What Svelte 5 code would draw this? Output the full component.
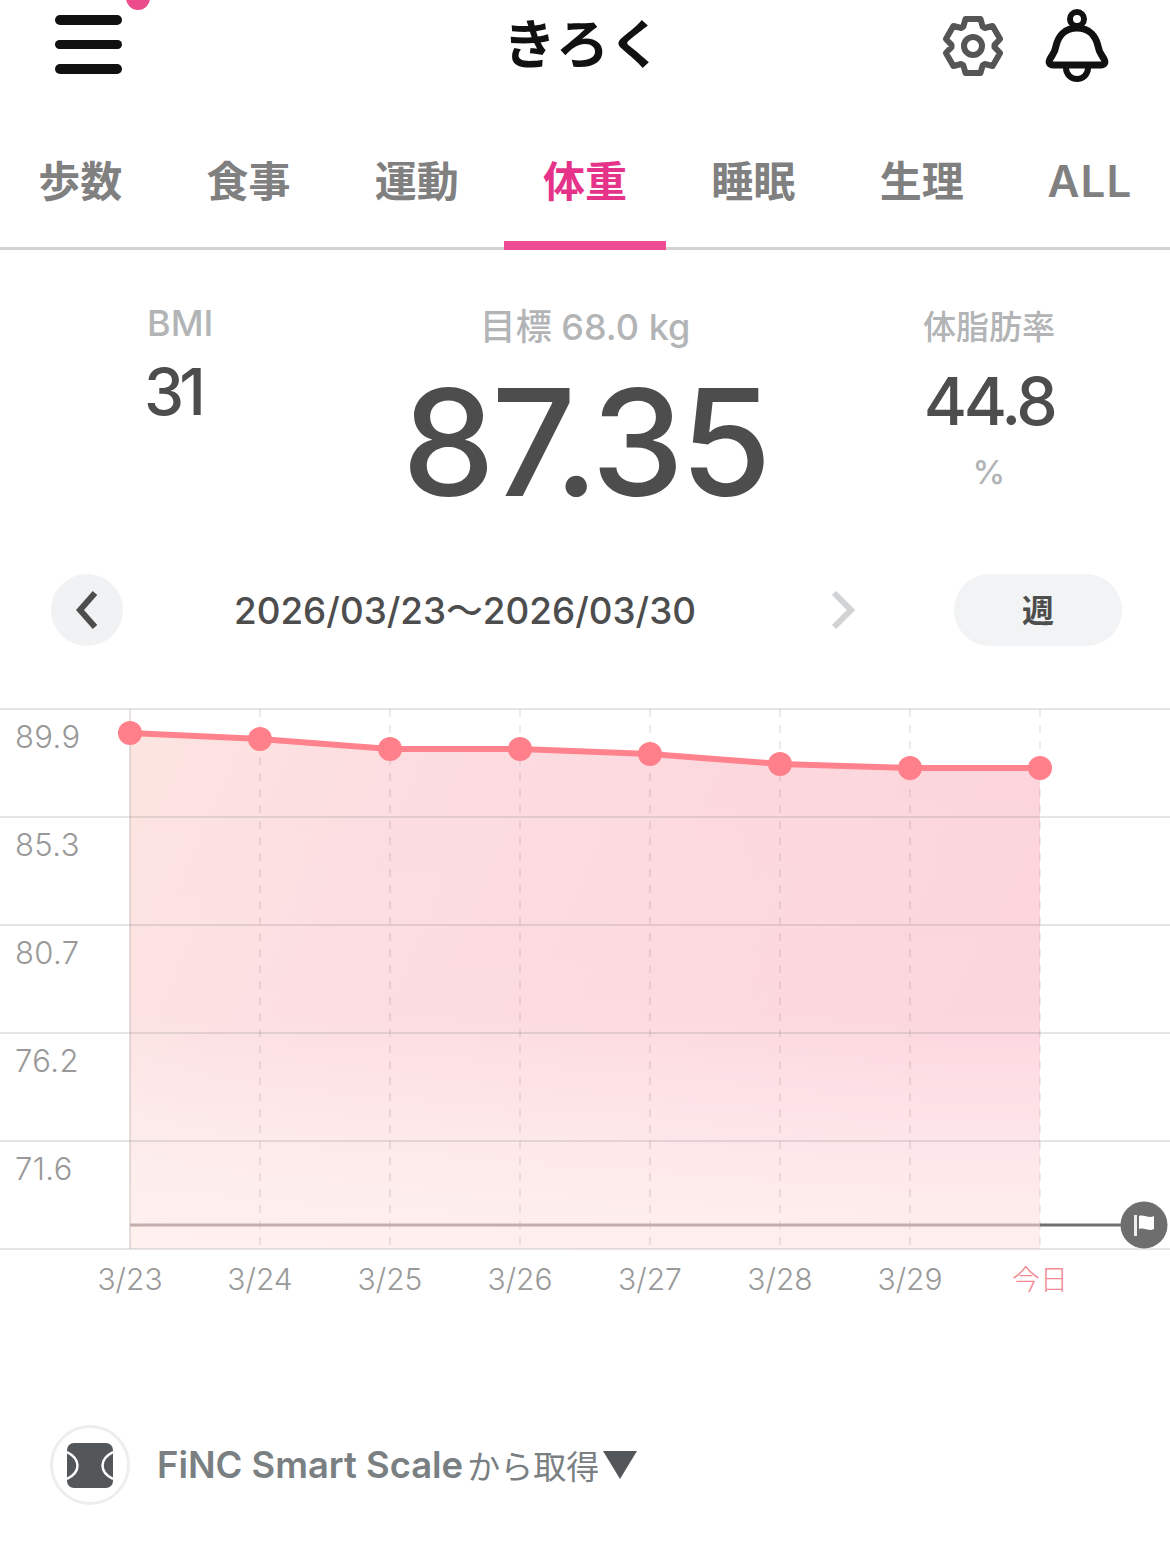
<script>
  const tabs = ['歩数', '食事', '運動', '体重', '睡眠', '生理', 'ALL'];
  const active = '体重';

  const gridY = [709, 817, 925, 1033, 1141, 1249];
  const yLabels = ['89.9', '85.3', '80.7', '76.2', '71.6'];
  const points = [
    { x: 130, y: 733, label: '3/23' },
    { x: 260, y: 739, label: '3/24' },
    { x: 390, y: 749, label: '3/25' },
    { x: 520, y: 749, label: '3/26' },
    { x: 650, y: 754, label: '3/27' },
    { x: 780, y: 764, label: '3/28' },
    { x: 910, y: 768, label: '3/29' },
    { x: 1040, y: 768, label: '今日' }
  ];
  const line = points.map((p) => p.x + ',' + p.y).join(' ');
  const area = '130,1249 ' + line + ' 1040,1249';

  // six teeth, stroked with round joins
  function gearPath(cx, cy, outer, inner) {
    let d = '';
    for (let i = 0; i < 6; i++) {
      const a = -Math.PI / 2 + (i * Math.PI) / 3;
      const pts = [
        [inner, a - 0.47],
        [outer, a - 0.27],
        [outer, a + 0.27],
        [inner, a + 0.47]
      ];
      for (const [r, t] of pts) {
        d += (d ? 'L' : 'M') + (cx + r * Math.cos(t)).toFixed(1) + ' ' + (cy + r * Math.sin(t)).toFixed(1);
      }
    }
    return d + 'Z';
  }
</script>

<div class="page">
  <header>
    <div class="menu">
      <span></span><span></span><span></span>
      <i class="dot"></i>
    </div>
    <h1>きろく</h1>
    <div class="actions">
      <svg class="gear" width="66" height="68" viewBox="0 0 66 68">
        <path d={gearPath(33, 34, 28, 21.5)} fill="none" stroke="#555" stroke-width="6" stroke-linejoin="round" />
        <circle cx="33" cy="34" r="9" fill="none" stroke="#555" stroke-width="6" />
      </svg>
      <svg class="bell" width="66" height="76" viewBox="0 0 66 76">
        <circle cx="33" cy="13" r="7" fill="none" stroke="#111" stroke-width="6" />
        <path d="M33 22C20 22 14 31 12 40C11 47 8 49 6 53C4 57 6 59 9 59L57 59C60 59 62 57 60 53C58 49 55 47 54 40C52 31 46 22 33 22Z" fill="none" stroke="#111" stroke-width="7" stroke-linejoin="round" />
        <path d="M22 62A11 11 0 0 0 44 62" fill="none" stroke="#111" stroke-width="6" />
      </svg>
    </div>
  </header>

  <nav>
    {#each tabs as tab}
      <div class="tab" class:active={tab === active} class:latin={tab === 'ALL'}>{tab}</div>
    {/each}
  </nav>

  <section class="stats">
    <div class="bmi">
      <div class="label">BMI</div>
      <div class="small-value">31</div>
    </div>
    <div class="weight">
      <div class="label">目標 68.0 kg</div>
      <div class="big-value">87.35</div>
    </div>
    <div class="fat">
      <div class="label">体脂肪率</div>
      <div class="fat-value">44.8</div>
      <div class="label unit">%</div>
    </div>
  </section>

  <section class="range">
    <button class="prev" aria-label="前へ">
      <svg width="28" height="40" viewBox="0 0 28 40">
        <path d="M22 3L7 20L22 37" fill="none" stroke="#4d4d4d" stroke-width="6" />
      </svg>
    </button>
    <div class="dates">2026/03/23～2026/03/30</div>
    <button class="next" aria-label="次へ">
      <svg width="28" height="40" viewBox="0 0 28 40">
        <path d="M4 3L21 20L4 37" fill="none" stroke="#d0d2d4" stroke-width="6" />
      </svg>
    </button>
    <button class="period">週</button>
  </section>

  <svg class="chart" width="1170" height="620" viewBox="0 690 1170 620">
    <defs>
      <linearGradient id="area-h" x1="0" y1="0" x2="1" y2="0.25">
        <stop offset="0" stop-color="#fce5e1" />
        <stop offset="0.3" stop-color="#fcdde1" />
        <stop offset="1" stop-color="#fcd4dc" />
      </linearGradient>
      <linearGradient id="area-v" x1="0" y1="0" x2="0" y2="1">
        <stop offset="0" stop-color="#fff" stop-opacity="0" />
        <stop offset="0.55" stop-color="#fff" stop-opacity="0.05" />
        <stop offset="1" stop-color="#fff6f2" stop-opacity="0.8" />
      </linearGradient>
    </defs>

    <polygon points={area} fill="url(#area-h)" />
    <polygon points={area} fill="url(#area-v)" />

    {#each gridY as y}
      <line x1="0" x2="1170" y1={y} y2={y} stroke="#8a8a8a" stroke-opacity="0.22" stroke-width="2" />
    {/each}

    {#each points as p, i}
      {#if i === 0}
        <line x1={p.x} x2={p.x} y1="709" y2="1249" stroke="#8a6a6a" stroke-opacity="0.2" stroke-width="2" />
      {:else}
        <line x1={p.x} x2={p.x} y1="709" y2="1249" stroke="#8a6a6a" stroke-opacity="0.14" stroke-width="2" stroke-dasharray="8 8" />
      {/if}
      <text class={i === 7 ? 'x-label today' : 'x-label'} x={p.x} y="1290" text-anchor="middle">{p.label}</text>
    {/each}

    {#each yLabels as label, i}
      <text class="y-label" x="15" y={gridY[i] + 39}>{label}</text>
    {/each}

    <line x1="130" x2="1040" y1="1225" y2="1225" stroke="#c4aeac" stroke-width="3" />
    <line x1="1040" x2="1125" y1="1225" y2="1225" stroke="#707070" stroke-width="3" />
    <circle cx="1144" cy="1225" r="23.5" fill="#6e6e6e" />
    <rect x="1134" y="1215" width="3" height="21" fill="#eee" />
    <path d="M1139 1216C1144 1214 1149 1219 1154 1216L1154 1229C1149 1232 1144 1227 1139 1229Z" fill="#fff" />

    <polyline points={line} fill="none" stroke="#ff828c" stroke-width="6" />
    {#each points as p}
      <circle cx={p.x} cy={p.y} r="12" fill="#ff7f8a" />
    {/each}
  </svg>

  <footer>
    <div class="device">
      <svg width="46" height="45" viewBox="0 0 46 45">
        <rect x="0" y="0" width="46" height="45" rx="7" fill="#54575a" />
        <path d="M0 9C14 16 14 29 0 36" fill="none" stroke="#fff" stroke-width="2.5" />
        <path d="M46 9C32 16 32 29 46 36" fill="none" stroke="#fff" stroke-width="2.5" />
      </svg>
    </div>
    <span class="source">FiNC Smart Scale</span><span class="source-jp">から取得</span><span class="caret"></span>
  </footer>
</div>

<style>
  :global(body) {
    background: #fff;
  }
  .page {
    width: 1170px;
    height: 1556px;
    overflow: hidden;
    font-family: Inter, 'Noto Sans CJK JP', sans-serif;
  }
  header {
    display: grid;
    grid-template-columns: 1fr auto 1fr;
    align-items: start;
    height: 130px;
    padding: 0 60px 0 55px;
    box-sizing: border-box;
  }
  .menu {
    position: relative;
    display: flex;
    flex-direction: column;
    gap: 15px;
    width: 67px;
    padding-top: 15px;
  }
  .menu span {
    display: block;
    height: 9.5px;
    border-radius: 5px;
    background: #111;
  }
  .dot {
    position: absolute;
    left: 71px;
    top: -14px;
    width: 24px;
    height: 24px;
    border-radius: 50%;
    background: #ec4b8c;
  }
  h1 {
    margin: 8px 0 0;
    font-size: 53px;
    line-height: 66px;
    font-weight: 700;
    color: #111;
    font-family: 'Noto Sans CJK JP', sans-serif;
  }
  .actions {
    display: flex;
    justify-content: flex-end;
    gap: 38px;
    padding-top: 6px;
  }
  .gear {
    margin-top: 6px;
  }
  nav {
    display: grid;
    grid-template-columns: repeat(7, 168.3px);
    height: 120px;
    margin-left: -4px;
    border-bottom: 3px solid #d2d2d2;
    width: 1174px;
    box-sizing: border-box;
  }
  .tab {
    text-align: center;
    font-family: 'Noto Sans CJK JP', sans-serif;
    font-size: 42px;
    font-weight: 700;
    line-height: 52px;
    padding-top: 23px;
    color: #808080;
  }
  .tab.latin {
    font-family: Inter, sans-serif;
    font-weight: 600;
    font-size: 44px;
    letter-spacing: 1px;
    padding-top: 25px;
  }
  .tab.active {
    color: #e6338a;
    position: relative;
  }
  .tab.active::after {
    content: '';
    position: absolute;
    left: 3px;
    right: 3px;
    bottom: -3px;
    height: 9px;
    background: #ee4d95;
  }
  .stats {
    display: grid;
    grid-template-columns: 370px 430px 370px;
    height: 324px;
  }
  .label {
    font-size: 36px;
    font-weight: 500;
    line-height: 44px;
    color: #b2b4b6;
  }
  .bmi {
    padding: 51px 0 0 147px;
  }
  .small-value {
    font-size: 64px;
    line-height: 78px;
    letter-spacing: -5px;
    font-weight: 500;
    color: #4d4d4d;
    margin: 8px 0 0 -3px;
  }
  .weight {
    text-align: center;
    padding-top: 55px;
  }
  .big-value {
    font-size: 148px;
    line-height: 170px;
    font-weight: 500;
    color: #4d4d4d;
    letter-spacing: -3.7px;
    margin-top: 9px;
  }
  .fat {
    text-align: center;
    padding: 55px 0 0 8px;
    box-sizing: border-box;
  }
  .fat .label {
    font-size: 33px;
  }
  .fat-value {
    font-size: 66px;
    font-weight: 500;
    line-height: 78px;
    letter-spacing: -3.5px;
    color: #4d4d4d;
    margin-top: 13px;
  }
  .unit {
    margin-top: 10px;
  }
  .range {
    display: flex;
    align-items: center;
    height: 72px;
    padding-left: 51px;
  }
  button {
    border: none;
    padding: 0;
    font: inherit;
    display: flex;
    align-items: center;
    justify-content: center;
  }
  .prev {
    width: 72px;
    height: 72px;
    border-radius: 50%;
    background: #f1f2f3;
  }
  .next {
    width: 28px;
    height: 40px;
    background: none;
    margin-left: 135px;
  }
  .dates {
    margin-left: 111px;
    padding-bottom: 4px;
    font-size: 36.8px;
    font-weight: 500;
    color: #4d4d4d;
    white-space: nowrap;
    width: 461px;
  }
  .period {
    width: 168px;
    height: 72px;
    padding-bottom: 5px;
    border-radius: 36px;
    background: #f1f3f4;
    margin-left: 96px;
    font-size: 32px;
    font-weight: 700;
    color: #4d4d4d;
    font-family: 'Noto Sans CJK JP', sans-serif;
  }
  .chart {
    display: block;
    margin-top: 44px;
  }
  .y-label {
    font-size: 31px;
    fill: #999;
    font-weight: 300;
    letter-spacing: 0.4px;
  }
  .x-label {
    font-size: 30px;
    fill: #999;
    font-weight: 300;
  }
  .x-label.today {
    fill: #f08b95;
    font-family: 'Noto Sans CJK JP', sans-serif;
    font-size: 28px;
  }
  footer {
    display: flex;
    align-items: center;
    height: 84px;
    margin-top: 113px;
    padding-left: 50px;
    color: #7a8082;
    font-size: 36.4px;
  }
  .device {
    width: 80px;
    height: 80px;
    border: 3px solid #eeeeee;
    border-radius: 50%;
    box-sizing: border-box;
    display: flex;
    align-items: center;
    justify-content: center;
    margin-right: 27px;
  }
  .source {
    font-weight: 600;
  }
  .source-jp {
    font-family: 'Noto Sans CJK JP', sans-serif;
    font-size: 33px;
    margin-left: 4px;
  }
  .caret {
    width: 0;
    height: 0;
    border-left: 17px solid transparent;
    border-right: 17px solid transparent;
    border-top: 28px solid #54575a;
    margin-left: 4px;
  }
</style>
